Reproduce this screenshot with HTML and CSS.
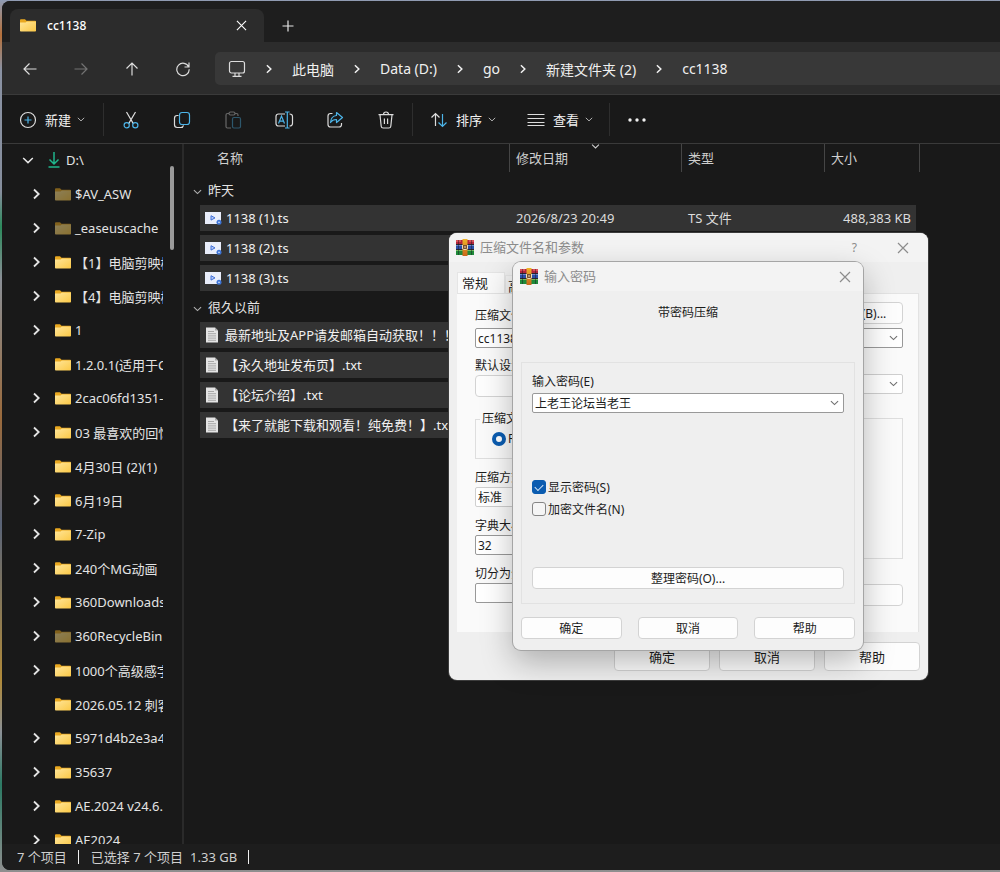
FILE: index.html
```html
<!DOCTYPE html>
<html lang="zh-CN">
<head>
    <meta charset="UTF-8">
    <meta name="viewport" content="width=device-width, initial-scale=1.0">
    <title>cc1138</title>
    <link rel="stylesheet" href="styles.css">
</head>
<body>
    <!-- Shared icons -->
    <svg class="sprite" aria-hidden="true">
        <defs>
            <linearGradient id="folderFill" x1="0" y1="0" x2="1" y2="1">
                <stop offset="0" stop-color="#ffe69a"/>
                <stop offset="1" stop-color="#fbc846"/>
            </linearGradient>
            <linearGradient id="beltFill" x1="0" y1="0" x2="0" y2="1">
                <stop offset="0" stop-color="#f0b429"/>
                <stop offset="1" stop-color="#c9661a"/>
            </linearGradient>
        </defs>
        <symbol id="folder" viewBox="0 0 16 13">
            <path d="M0 1.2Q0 .3.9.3H5l1.5 1.5h8.7q.8 0 .8.8V6H0z" fill="#e9a820"/>
            <path d="M0 3.4h5.6l1.2-1H16v9.4q0 .8-.8.8H.8q-.8 0-.8-.8z" fill="url(#folderFill)"/>
        </symbol>
        <symbol id="chev-right" viewBox="0 0 7 12">
            <path d="M1 1.5 5.7 6 1 10.5" fill="none" stroke="currentColor" stroke-width="1.8"/>
        </symbol>
        <symbol id="chev-down" viewBox="0 0 12 7">
            <path d="M1.2 1 6 5.6 10.8 1" fill="none" stroke="currentColor" stroke-width="1.5"/>
        </symbol>
        <symbol id="close" viewBox="0 0 12 12">
            <path d="M1 1 11 11M11 1 1 11" fill="none" stroke="currentColor" stroke-width="1.2"/>
        </symbol>
        <symbol id="video" viewBox="0 0 17 14">
            <rect x="0" y="1" width="16" height="12" fill="#e9eefb"/>
            <path d="M6 4.7v4.4l4-2.2z" fill="#b9cdf8" stroke="#3f6fd8"/>
            <circle cx="14" cy="11.3" r="2.5" fill="#3d74d6"/>
            <circle cx="14" cy="11.3" r=".9" fill="#c9dafa"/>
        </symbol>
        <symbol id="text" viewBox="0 0 13 16">
            <path d="M.5.5h9l3 3v12H.5z" fill="#e4e4e4"/>
            <path d="M9.5.5v3h3z" fill="#a9a9a9"/>
            <path d="M2.5 4.5h6M2.5 6.7h8M2.5 8.9h8M2.5 11.1h8M2.5 13.3h8" stroke="#a8a8a8"/>
        </symbol>
        <symbol id="rar" viewBox="0 0 18 17">
            <path d="M0 1h18v15H0z" fill="#2b2430"/>
            <path d="M0 1h18v4H0z" fill="#b3263c"/>
            <path d="M0 1h5v2H0zM13 1h5v2h-5z" fill="#d9505a"/>
            <path d="M0 6h18v4H0z" fill="#2a4fa8"/>
            <path d="M0 6h18v1H0z" fill="#6f87cc"/>
            <path d="M0 11h18v5H0z" fill="#1f8a3a"/>
            <path d="M0 11h18v1H0z" fill="#77bd62"/>
            <path d="M2 1h1v15H2zM15 1h1v15h-1z" fill="#1b1722" opacity=".45"/>
            <path d="M6.5 0h5v17h-5z" fill="url(#beltFill)"/>
            <rect x="6" y="6" width="6" height="5" rx="1" fill="#7a4f30"/>
            <path d="M6.5 6v3q0 1.500 1 1.500h3q1 0 1-1.500V6M9 7v2" fill="none" stroke="#f3dfae"/>
        </symbol>
    </svg>

    <div class="explorer">
        <div class="tab-strip">
            <div class="tab">
                <svg class="folder"><use href="#folder"/></svg>
                <span class="tab-title">cc1138</span>
                <button type="button" class="tab-close" aria-label="关闭标签页"><svg width="11" height="11"><use href="#close"/></svg></button>
            </div>
            <button type="button" class="new-tab" aria-label="新标签页">
                <svg width="12" height="12" viewBox="0 0 12 12"><path d="M6 .5v11M.5 6h11" stroke="#e6e6e6" stroke-width="1.2"/></svg>
            </button>
        </div>

        <div class="nav-row">
            <button type="button" class="icon-btn" aria-label="后退">
                <svg width="14" height="14" viewBox="0 0 14 14"><path d="M13.5 7H1M6.5 1.5 1 7l5.5 5.5"/></svg>
            </button>
            <button type="button" class="icon-btn disabled" aria-label="前进" disabled>
                <svg width="14" height="14" viewBox="0 0 14 14"><path d="M.5 7H13M7.5 1.5 13 7l-5.5 5.5"/></svg>
            </button>
            <button type="button" class="icon-btn" aria-label="向上">
                <svg width="14" height="14" viewBox="0 0 14 14"><path d="M7 13.5V1M1.5 6.5 7 1l5.500 5.500"/></svg>
            </button>
            <button type="button" class="icon-btn" aria-label="刷新">
                <svg width="16" height="16" viewBox="0 0 16 16"><path d="M13.700 6A6.200 6.200 0 1 0 14.200 8.300M14 1.500V6H9.500"/></svg>
            </button>
            <nav class="address">
                <svg class="pc" width="18" height="18" viewBox="0 0 18 18"><rect x="1.5" y="1.5" width="15" height="11.5" rx="2"/><path d="M7 13v3M11 13v3M4.5 16.300h9"/></svg>
                <svg class="sep"><use href="#chev-right"/></svg>
                <a href="#">此电脑</a>
                <svg class="sep"><use href="#chev-right"/></svg>
                <a href="#">Data (D:)</a>
                <svg class="sep"><use href="#chev-right"/></svg>
                <a href="#">go</a>
                <svg class="sep"><use href="#chev-right"/></svg>
                <a href="#">新建文件夹 (2)</a>
                <svg class="sep"><use href="#chev-right"/></svg>
                <a href="#">cc1138</a>
            </nav>
        </div>

        <div class="toolbar">
            <button type="button" class="menu-btn new-btn">
                <svg width="18" height="18" viewBox="0 0 18 18"><circle cx="9" cy="9" r="7.5"/><path class="blue" d="M9 5.5v7M5.5 9h7"/></svg>
                新建
                <svg class="drop"><use href="#chev-down"/></svg>
            </button>
            <span class="divider"></span>
            <button type="button" class="icon-btn" aria-label="剪切">
                <svg width="18" height="18" viewBox="0 0 18 18"><path d="M4.5 1 11.300 12.600M13.500 1 6.700 12.600"/><circle class="blue" cx="4.700" cy="14.300" r="2.600"/><circle class="blue" cx="13.300" cy="14.300" r="2.600"/></svg>
            </button>
            <button type="button" class="icon-btn" aria-label="复制">
                <svg width="18" height="18" viewBox="0 0 18 18"><path d="M5.500 4.500H4.200Q1.500 4.500 1.500 7.200v6.600q0 2.700 2.700 2.700h3.600q2.200 0 2.700-2.200"/><rect class="blue" x="6.500" y="1.500" width="10" height="12" rx="2.500"/></svg>
            </button>
            <button type="button" class="icon-btn disabled" aria-label="粘贴" disabled>
                <svg width="18" height="18" viewBox="0 0 18 18"><path d="M5 2.500H3.500q-1.500 0-1.500 1.500v11.500q0 1.500 1.500 1.500H7M11 2.500h1.500q1.500 0 1.500 1.500v1"/><rect x="5" y="1" width="6" height="3" rx="1.500"/><rect class="blue" x="8.500" y="6.500" width="8" height="10.500" rx="1.500"/></svg>
            </button>
            <button type="button" class="icon-btn" aria-label="重命名">
                <svg width="20" height="18" viewBox="0 0 20 18"><path d="M11 3H4.500Q2 3 2 5.500v7Q2 15 4.500 15H11M15.500 3Q18.500 3 18.500 5.500v7q0 2.500-3 2.500"/><path class="blue" d="M4.500 12.500 7.500 5l3 7.500M5.500 10.200h4M13.300 1.500v15M11 1h4.600M11 17h4.600"/></svg>
            </button>
            <button type="button" class="icon-btn" aria-label="共享">
                <svg width="18" height="18" viewBox="0 0 18 18"><path d="M6.500 2.500h-2q-2.500 0-2.500 2.500v8.500Q2 16 4.500 16h8.500q2.500 0 2.500-2.500V12"/><path class="blue" d="M10.500 1.500 16.500 6.500l-6 5V8.500Q6.800 8.300 4.500 11.500 5 5 10.500 4.500z" stroke-linejoin="round"/></svg>
            </button>
            <button type="button" class="icon-btn" aria-label="删除">
                <svg width="18" height="18" viewBox="0 0 18 18"><path d="M1.500 3.700h15M6.500 3.500Q6.500 1 9 1t2.500 2.500M3 4l1.200 11.200q.2 1.800 2 1.800h5.600q1.800 0 2-1.800L15 4M7.400 7.500v5.500M10.600 7.500v5.500"/></svg>
            </button>
            <span class="divider"></span>
            <button type="button" class="menu-btn">
                <svg width="18" height="18" viewBox="0 0 18 18"><path d="M5.500 15V2.500M1.500 6.500l4-4 4 4"/><path class="blue" d="M12.500 3v12.500M8.500 11.500l4 4 4-4"/></svg>
                排序
                <svg class="drop"><use href="#chev-down"/></svg>
            </button>
            <button type="button" class="menu-btn">
                <svg width="18" height="18" viewBox="0 0 18 18"><path d="M.5 3.500h17M.5 7.500h17M.5 11.500h17M.5 14.500h17"/></svg>
                查看
                <svg class="drop"><use href="#chev-down"/></svg>
            </button>
            <span class="divider"></span>
            <button type="button" class="icon-btn" aria-label="查看更多">
                <svg class="dots" width="18" height="4" viewBox="0 0 18 4"><circle cx="2" cy="2" r="1.700"/><circle cx="9" cy="2" r="1.700"/><circle cx="16" cy="2" r="1.700"/></svg>
            </button>
        </div>

        <div class="content">
            <aside class="sidebar">
                <ul class="tree">
                    <li class="root"><svg class="twisty-open"><use href="#chev-down"/></svg><svg class="drive" width="12" height="16" viewBox="0 0 12 16"><path d="M6 0v11.500M1.500 7.500 6 12l4.500-4.500M.5 15h11" fill="none" stroke="#1fb58c" stroke-width="1.500"/></svg><a href="#">D:\</a></li>
                    <li><svg class="twisty"><use href="#chev-right"/></svg><svg class="folder dim"><use href="#folder"/></svg><a href="#">$AV_ASW</a></li>
                    <li><svg class="twisty"><use href="#chev-right"/></svg><svg class="folder dim"><use href="#folder"/></svg><a href="#">_easeuscache</a></li>
                    <li><svg class="twisty"><use href="#chev-right"/></svg><svg class="folder"><use href="#folder"/></svg><a href="#">【1】电脑剪映模</a></li>
                    <li><svg class="twisty"><use href="#chev-right"/></svg><svg class="folder"><use href="#folder"/></svg><a href="#">【4】电脑剪映模</a></li>
                    <li><svg class="twisty"><use href="#chev-right"/></svg><svg class="folder"><use href="#folder"/></svg><a href="#">1</a></li>
                    <li><span class="twisty"></span><svg class="folder"><use href="#folder"/></svg><a href="#">1.2.0.1(适用于C</a></li>
                    <li><svg class="twisty"><use href="#chev-right"/></svg><svg class="folder"><use href="#folder"/></svg><a href="#">2cac06fd1351-</a></li>
                    <li><svg class="twisty"><use href="#chev-right"/></svg><svg class="folder"><use href="#folder"/></svg><a href="#">03 最喜欢的回忆</a></li>
                    <li><span class="twisty"></span><svg class="folder"><use href="#folder"/></svg><a href="#">4月30日 (2)(1)</a></li>
                    <li><svg class="twisty"><use href="#chev-right"/></svg><svg class="folder"><use href="#folder"/></svg><a href="#">6月19日</a></li>
                    <li><svg class="twisty"><use href="#chev-right"/></svg><svg class="folder"><use href="#folder"/></svg><a href="#">7-Zip</a></li>
                    <li><svg class="twisty"><use href="#chev-right"/></svg><svg class="folder"><use href="#folder"/></svg><a href="#">240个MG动画</a></li>
                    <li><svg class="twisty"><use href="#chev-right"/></svg><svg class="folder"><use href="#folder"/></svg><a href="#">360Downloads</a></li>
                    <li><svg class="twisty"><use href="#chev-right"/></svg><svg class="folder dim"><use href="#folder"/></svg><a href="#">360RecycleBin</a></li>
                    <li><svg class="twisty"><use href="#chev-right"/></svg><svg class="folder"><use href="#folder"/></svg><a href="#">1000个高级感字</a></li>
                    <li><span class="twisty"></span><svg class="folder"><use href="#folder"/></svg><a href="#">2026.05.12 刺客</a></li>
                    <li><svg class="twisty"><use href="#chev-right"/></svg><svg class="folder"><use href="#folder"/></svg><a href="#">5971d4b2e3a4</a></li>
                    <li><svg class="twisty"><use href="#chev-right"/></svg><svg class="folder"><use href="#folder"/></svg><a href="#">35637</a></li>
                    <li><svg class="twisty"><use href="#chev-right"/></svg><svg class="folder"><use href="#folder"/></svg><a href="#">AE.2024 v24.6.</a></li>
                    <li><svg class="twisty"><use href="#chev-right"/></svg><svg class="folder"><use href="#folder"/></svg><a href="#">AE2024</a></li>
                </ul>
                <div class="scroll-thumb"></div>
            </aside>

            <main class="files">
                <table>
                    <colgroup>
                        <col class="col-gutter"><col class="col-name"><col class="col-date"><col class="col-type"><col class="col-size"><col class="col-end">
                    </colgroup>
                    <thead>
                        <tr>
                            <td></td>
                            <th class="name">名称</th>
                            <th class="line sorted">修改日期<svg class="sort-mark"><use href="#chev-down"/></svg></th>
                            <th class="line">类型</th>
                            <th class="line">大小</th>
                            <td class="end"></td>
                        </tr>
                    </thead>
                    <tbody>
                        <tr class="group"><th colspan="6"><svg class="drop"><use href="#chev-down"/></svg>昨天</th></tr>
                        <tr><td></td><td class="cell name"><svg class="video"><use href="#video"/></svg>1138 (1).ts</td><td class="cell">2026/8/23 20:49</td><td class="cell">TS 文件</td><td class="cell size">488,383 KB</td><td></td></tr>
                        <tr><td></td><td class="cell name"><svg class="video"><use href="#video"/></svg>1138 (2).ts</td><td></td><td></td><td></td><td></td></tr>
                        <tr><td></td><td class="cell name"><svg class="video"><use href="#video"/></svg>1138 (3).ts</td><td></td><td></td><td></td><td></td></tr>
                    </tbody>
                    <tbody>
                        <tr class="group"><th colspan="6"><svg class="drop"><use href="#chev-down"/></svg>很久以前</th></tr>
                        <tr><td></td><td class="cell name"><svg class="text"><use href="#text"/></svg>最新地址及APP请发邮箱自动获取！！！</td><td></td><td></td><td></td><td></td></tr>
                        <tr><td></td><td class="cell name"><svg class="text"><use href="#text"/></svg>【永久地址发布页】.txt</td><td></td><td></td><td></td><td></td></tr>
                        <tr><td></td><td class="cell name"><svg class="text"><use href="#text"/></svg>【论坛介绍】.txt</td><td></td><td></td><td></td><td></td></tr>
                        <tr><td></td><td class="cell name"><svg class="text"><use href="#text"/></svg>【来了就能下载和观看！纯免费！】.txt</td><td></td><td></td><td></td><td></td></tr>
                    </tbody>
                </table>
            </main>
        </div>

        <footer class="status">
            <span>7 个项目</span>
            <span class="bar"></span>
            <span>已选择 7 个项目</span>
            <span class="total">1.33 GB</span>
            <span class="bar"></span>
        </footer>
    </div>

    <!-- Archive options -->
    <section class="dialog archive-dialog">
        <header class="dialog-title">
            <svg class="rar"><use href="#rar"/></svg>
            <h2>压缩文件名和参数</h2>
            <button type="button" class="help-btn" aria-label="帮助">?</button>
            <button type="button" class="close-btn" aria-label="关闭"><svg width="12" height="12"><use href="#close"/></svg></button>
        </header>
        <div class="dialog-tabs">
            <button type="button" class="active">常规</button>
            <button type="button">高级</button>
        </div>
        <form class="panel">
            <div class="file-row">
                <label for="archiveName">压缩文件名</label>
                <button type="button" class="btn browse">浏览(B)...</button>
            </div>
            <div class="combo strong">
                <input type="text" id="archiveName" value="cc1138">
                <svg class="arrow"><use href="#chev-down"/></svg>
            </div>
            <div class="panel-cols">
                <div class="panel-left">
                    <label for="profile">默认设置</label>
                    <button type="button" class="btn" id="profile"></button>
                    <fieldset class="format">
                        <legend>压缩文件格式</legend>
                        <label class="check"><input type="radio" name="format" checked>RAR</label>
                    </fieldset>
                    <label for="method">压缩方式</label>
                    <select id="method"><option>标准</option></select>
                    <label for="dict">字典大小</label>
                    <select id="dict" class="strong"><option>32</option></select>
                    <label for="volume">切分为分卷</label>
                    <input type="text" id="volume" class="strong">
                </div>
                <div class="panel-right">
                    <div class="combo">
                        <select aria-label="更新方式"><option></option></select>
                        <svg class="arrow"><use href="#chev-down"/></svg>
                    </div>
                    <fieldset class="options"></fieldset>
                    <button type="button" class="btn" aria-label="设置"></button>
                </div>
            </div>
        </form>
        <div class="dialog-buttons">
            <button type="button" class="btn">确定</button>
            <button type="button" class="btn">取消</button>
            <button type="button" class="btn">帮助</button>
        </div>
    </section>

    <!-- Password prompt -->
    <section class="dialog password-dialog">
        <header class="dialog-title">
            <svg class="rar"><use href="#rar"/></svg>
            <h2>输入密码</h2>
            <button type="button" class="close-btn" aria-label="关闭"><svg width="12" height="12"><use href="#close"/></svg></button>
        </header>
        <p class="caption">带密码压缩</p>
        <form class="password-box">
            <label for="password">输入密码(E)</label>
            <div class="combo strong">
                <input type="text" id="password" value="上老王论坛当老王">
                <svg class="arrow"><use href="#chev-down"/></svg>
            </div>
            <div class="checks">
                <label class="check"><input type="checkbox" checked>显示密码(S)</label>
                <label class="check"><input type="checkbox">加密文件名(N)</label>
            </div>
            <button type="button" class="btn organize">整理密码(O)...</button>
        </form>
        <div class="dialog-buttons">
            <button type="button" class="btn">确定</button>
            <button type="button" class="btn">取消</button>
            <button type="button" class="btn">帮助</button>
        </div>
    </section>
</body>
</html>
```

FILE: styles.css
```css
* {
    box-sizing: border-box;
}
body {
    margin: 0;
    height: 100vh;
    padding: 1px 0 2px 2px;
    overflow: hidden;
    background: linear-gradient(#8f9bb3, #b5703a 4%, #8a92a3 8%, #868e9d 22%, #2c8a5c 26%, #8a8f96 32%, #9a6a3c 48%, #5a6478 60%, #b08a3a 78%, #8a9096 84%, #2c7a64 90%, #8f8f8f);
    font-family: "Noto Sans", "Noto Sans CJK SC", sans-serif;
    font-size: 13px;
    color: #e4e4e4;
    position: relative;
}
button, input, select {
    font: inherit;
    color: inherit;
}
button {
    padding: 0;
    border: none;
    background: none;
}
a {
    color: inherit;
    text-decoration: none;
}
svg {
    display: block;
    flex: none;
}
.sprite {
    position: absolute;
    width: 0;
    height: 0;
}

/* Explorer window */
.explorer {
    height: 100%;
    display: flex;
    flex-direction: column;
    background: #191919;
    border-radius: 8px 0 0 8px;
    overflow: hidden;
}
.tab-strip {
    height: 41px;
    padding: 8px 0 0 8px;
    display: flex;
    background: #1e1e1e;
}
.tab {
    width: 254px;
    padding: 0 17px 0 10px;
    display: flex;
    align-items: center;
    background: #2c2c2c;
    border-radius: 8px 8px 0 0;
    color: #fff;
}
.tab-title {
    margin-left: 11px;
    font-size: 12px;
    font-weight: 500;
}
.tab-close {
    margin-left: auto;
}
.new-tab {
    width: 48px;
    display: flex;
    align-items: center;
    justify-content: center;
}
.folder {
    width: 16px;
    height: 13px;
}
.dim {
    opacity: 0.5;
}
.nav-row {
    height: 53px;
    padding: 10px 0 9px 2px;
    display: flex;
    background: #2c2c2c;
    border-bottom: 1px solid #3a3a3a;
}
.icon-btn {
    width: 51px;
    display: flex;
    align-items: center;
    justify-content: center;
}
.icon-btn svg, .menu-btn svg, .pc {
    fill: none;
    stroke: #dcdcdc;
    stroke-width: 1.2;
}
.icon-btn .blue, .menu-btn .blue {
    stroke: #4cb4e8;
}
.icon-btn .dots {
    fill: #f0f0f0;
    stroke: none;
}
.disabled {
    opacity: 0.4;
}
.address {
    flex: 1;
    margin-left: 7px;
    padding-left: 13px;
    display: flex;
    align-items: center;
    gap: 20px;
    background: #383838;
    border-radius: 5px 0 0 5px;
    font-size: 14px;
    white-space: nowrap;
    color: #f0f0f0;
}
.sep {
    width: 6px;
    height: 10px;
}
.toolbar {
    height: 49px;
    padding-top: 1px;
    display: flex;
    align-items: stretch;
    border-bottom: 1px solid #3a3a3a;
}
.menu-btn {
    padding: 0 15px 0 16px;
    display: flex;
    align-items: center;
    gap: 8px;
    color: #f0f0f0;
}
.menu-btn .drop {
    margin-left: -2px;
    color: #b0b0b0;
}
.drop {
    width: 8px;
    height: 5px;
}
.new-btn {
    padding: 0 17px;
}
.divider {
    width: 1px;
    margin: 7px 1px;
    background: #2e2e2e;
}
.content {
    flex: 1;
    min-height: 0;
    display: flex;
}

/* Folder tree */
.sidebar {
    width: 182px;
    border-right: 2px solid #2a2a2a;
    overflow: hidden;
    position: relative;
}
.tree {
    width: 161px;
    margin: -1px 0 0;
    padding: 0;
    list-style: none;
}
.tree li {
    height: 34px;
    padding-left: 31px;
    display: flex;
    align-items: center;
    overflow: hidden;
    white-space: nowrap;
}
.tree .root {
    padding-left: 20px;
}
.twisty {
    width: 7px;
    height: 12px;
    margin-right: 15px;
    flex: none;
}
.twisty-open {
    width: 12px;
    height: 7px;
    margin-right: 14px;
}
.tree a {
    margin-left: 4px;
}
.tree .root a {
    margin-left: 6px;
}
.scroll-thumb {
    position: absolute;
    top: 22px;
    right: 8px;
    width: 4px;
    height: 84px;
    border-radius: 2px;
    background: #9a9a9a;
}

/* File list */
.files {
    flex: 1;
    overflow: hidden;
}
table {
    width: 736px;
    table-layout: fixed;
    border-spacing: 0;
}
.col-gutter {
    width: 16px;
}
.col-name {
    width: 309px;
}
.col-date {
    width: 172px;
}
.col-type {
    width: 143px;
}
.col-size {
    width: 92px;
}
.col-end {
    width: 4px;
}
th, td {
    padding: 0;
    font-weight: normal;
    text-align: left;
    white-space: nowrap;
}
thead th {
    height: 28px;
    padding: 0 0 2px 6px;
    color: #cfcfcf;
}
thead .name {
    padding-left: 17px;
}
.line {
    border-left: 1px solid #454545;
}
.end {
    border-right: 1px solid #454545;
}
.sorted {
    position: relative;
}
.sort-mark {
    position: absolute;
    top: 0;
    left: 81px;
    width: 9px;
    height: 5px;
}
tbody tr {
    height: 30px;
}
tbody .group {
    height: 27px;
}
.group th {
    padding: 0 0 3px 9px;
    line-height: 24px;
}
.group .drop {
    display: inline-block;
    width: 9px;
    height: 6px;
    margin-right: 6px;
    vertical-align: middle;
    color: #b0b0b0;
}
thead + tbody .group th {
    padding-top: 6px;
}
.cell {
    height: 30px;
    padding-left: 7px;
    border-bottom: 4px solid #191919;
    background: #333;
    line-height: 26px;
    color: #dcdcdc;
}
td.name {
    padding-left: 5px;
    color: #f0f0f0;
}
.size {
    padding: 0 5px 0 0;
    text-align: right;
}
.video, .text {
    float: left;
    width: 17px;
    height: 14px;
    margin: 6px 4px 0 0;
}
.text {
    width: 14px;
    height: 16px;
    margin: 5px 6px 0 0;
}

.status {
    height: 26px;
    padding: 0 0 1px 15px;
    display: flex;
    align-items: center;
    background: #1d1d1d;
    color: #d0d0d0;
}
.bar {
    width: 1px;
    height: 14px;
    margin: 0 12px 0 11px;
    background: #f0f0f0;
}
.total {
    margin-left: 7px;
}

/* Dialogs */
.dialog {
    position: absolute;
    display: flex;
    flex-direction: column;
    background: #efefef;
    border-radius: 8px;
    overflow: hidden;
    font-size: 12px;
    color: #1c1c1c;
}
.archive-dialog {
    left: 449px;
    top: 233px;
    width: 479px;
    height: 447px;
    box-shadow: 0 0 0 1px #3c3c3c;
}
.password-dialog {
    left: 513px;
    top: 262px;
    width: 350px;
    height: 388px;
    box-shadow: 0 0 0 1px #a5a5a5, 0 12px 32px rgba(0, 0, 0, 0.28);
}
.dialog-title {
    height: 29px;
    padding: 0 19px 0 7px;
    display: flex;
    align-items: center;
    background: #f3f3f3;
    color: #8c8c8c;
}
.password-dialog .dialog-title {
    padding-right: 12px;
}
.dialog-title h2 {
    margin: 0 auto 0 6px;
    padding-bottom: 2px;
    font-size: 13px;
    font-weight: normal;
}
.rar {
    width: 18px;
    height: 17px;
}
.help-btn {
    margin-right: 40px;
}
.dialog-tabs {
    height: 31px;
    padding: 10px 8px 0;
    display: flex;
    align-items: stretch;
    font-size: 13px;
}
.dialog-tabs button {
    width: 48px;
    margin-top: 3px;
    padding-left: 2px;
    background: #f2f2f2;
    border: 1px solid #e5e5e5;
    border-bottom: none;
    text-align: left;
}
.dialog-tabs .active {
    margin-top: 0;
    padding: 0 0 2px 4px;
    background: #fafafa;
}
.panel {
    flex: 1;
    margin: 0 9px 0 8px;
    padding: 8px 15px 0 18px;
    background: #fafafa;
    border-right: 1px solid #e3e3e3;
    border-top: 1px solid #e3e3e3;
}
.file-row {
    height: 22px;
    margin-bottom: 4px;
    display: flex;
    align-items: flex-end;
    justify-content: space-between;
}
.btn {
    height: 22px;
    background: #fdfdfd;
    border: 1px solid #d3d3d3;
    border-radius: 4px;
}
.browse {
    width: 96px;
    padding-left: 14px;
}
.combo {
    position: relative;
}
.arrow {
    position: absolute;
    top: 7px;
    right: 5px;
    width: 9px;
    height: 6px;
    color: #707070;
    pointer-events: none;
}
.dialog input[type="text"], .dialog select {
    appearance: none;
    display: block;
    width: 100%;
    height: 20px;
    padding: 0 2px;
    border: 1px solid #cfcfcf;
    border-radius: 2px;
    background: #fff;
}
.dialog .strong input[type="text"], .dialog input[type="text"].strong, .dialog select.strong {
    border-color: #999;
}
.panel-cols {
    display: grid;
    grid-template-columns: 190px 1fr;
    gap: 10px;
}
.panel-left label, .panel-left legend {
    display: block;
    line-height: 18px;
}
.panel-left > label {
    margin-top: 10px;
}
.panel-left > label:first-child {
    margin-top: 9px;
}
.panel-left .btn {
    display: block;
    width: 96px;
}
fieldset {
    min-width: 0;
    margin: 0;
    padding: 0;
    border: 1px solid #dedede;
}
.format {
    height: 49px;
    margin-top: 13px;
    padding: 2px 16px 0;
}
.format legend {
    padding: 0 2px;
    margin-left: -12px;
}
.panel-right {
    padding-top: 26px;
}
.options {
    height: 141px;
    margin: 24px 0 25px;
}
.panel-right .btn {
    display: block;
    width: 100%;
}
.check, .panel-left .check {
    display: flex;
    align-items: center;
    gap: 2px;
}
.check input {
    appearance: none;
    flex: none;
    width: 14px;
    height: 14px;
    margin: 0;
    border: 1px solid #858585;
    border-radius: 3px;
    background: #f5f5f5;
}
.check input[type="checkbox"]:checked {
    border-color: #0b5cb0;
    background: #0b5cb0;
}
.check input[type="checkbox"]:checked::after {
    content: "";
    display: block;
    width: 7px;
    height: 4px;
    margin: 3px 0 0 2px;
    border: solid #d5e6f8;
    border-width: 0 0 1px 1px;
    transform: rotate(-45deg);
}
.check input[type="radio"] {
    border: 4px solid #0b5cb0;
    border-radius: 50%;
    background: #fff;
}
.dialog-buttons {
    display: flex;
    justify-content: flex-end;
}
.archive-dialog .dialog-buttons {
    padding: 10px 8px 9px;
    gap: 9px;
    font-size: 13px;
}
.archive-dialog .dialog-buttons .btn {
    width: 96px;
    height: 29px;
}
.password-dialog .dialog-buttons {
    padding: 13px 8px 11px;
    gap: 16px;
}
.password-dialog .dialog-buttons .btn {
    flex: 1;
}
.caption {
    margin: 13px 0 40px;
    line-height: 18px;
    text-align: center;
}
.password-box {
    flex: 1;
    margin: 0 8px;
    padding: 10px 10px 14px;
    display: flex;
    flex-direction: column;
    border: 1px solid #e2e2e2;
}
.password-box > label {
    line-height: 18px;
    margin-bottom: 2px;
}
.checks {
    margin-top: 63px;
}
.checks .check {
    height: 22px;
}
.organize {
    margin-top: auto;
}
```
